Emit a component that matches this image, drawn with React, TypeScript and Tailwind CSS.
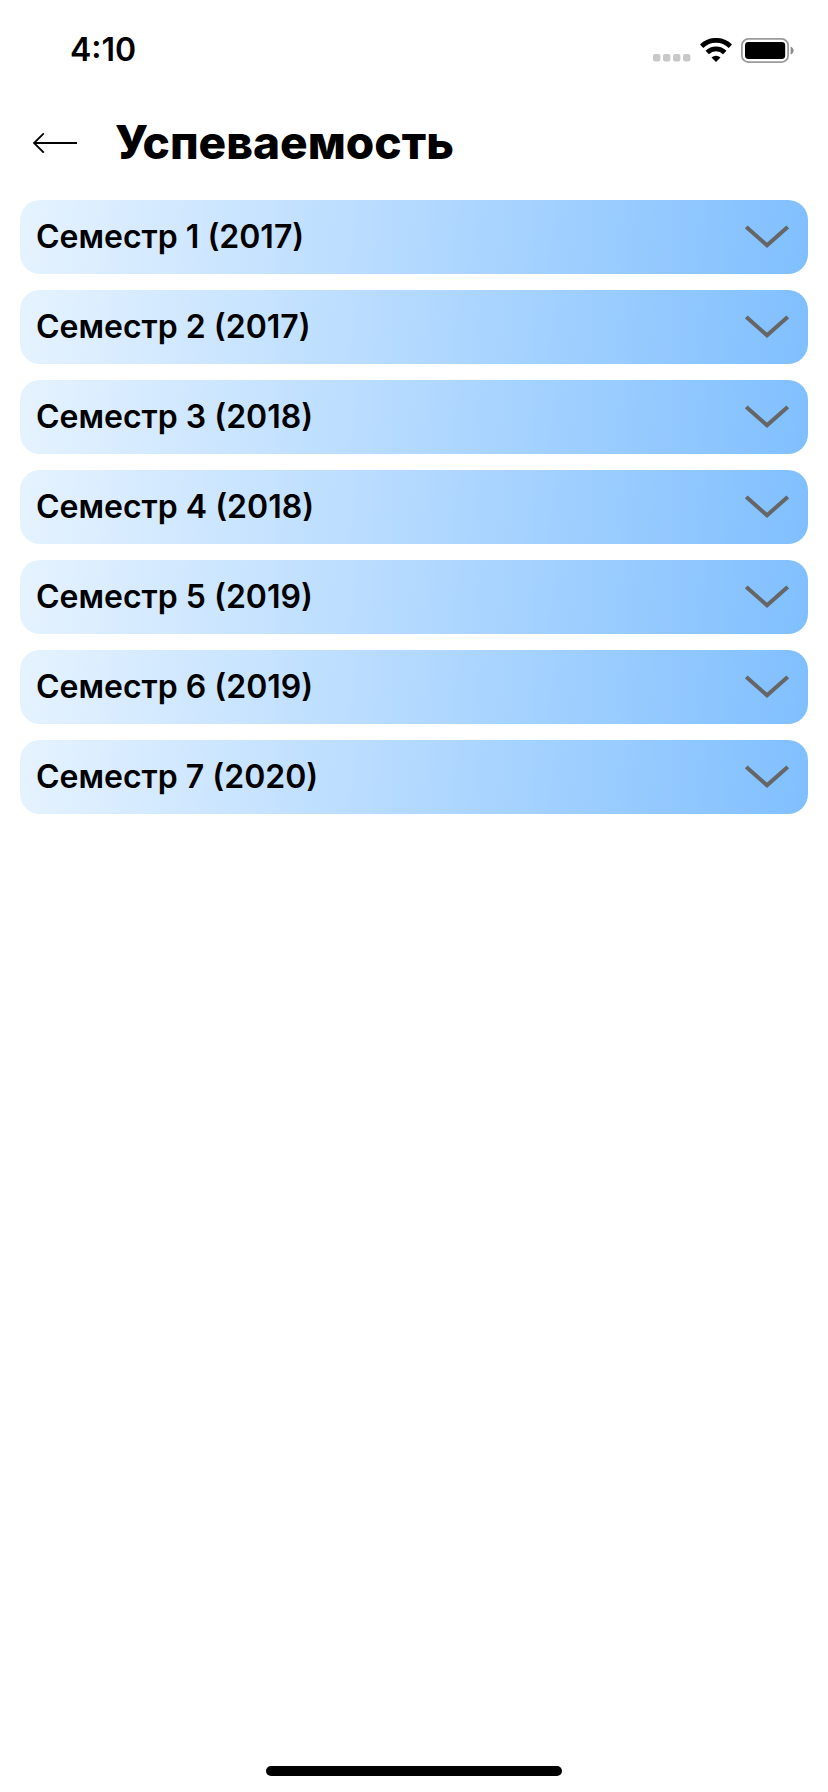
const semesters = [
  { number: 1, year: 2017 },
  { number: 2, year: 2017 },
  { number: 3, year: 2018 },
  { number: 4, year: 2018 },
  { number: 5, year: 2019 },
  { number: 6, year: 2019 },
  { number: 7, year: 2020 },
];

function SignalDots() {
  return (
    <svg className="h-2 w-[38px]" viewBox="0 0 38 8" fill="#c8c8c8" aria-hidden="true">
      <rect x="0" y="0" width="7.4" height="7.4" rx="2.2" />
      <rect x="10" y="0" width="7.4" height="7.4" rx="2.2" />
      <rect x="20" y="0" width="7.4" height="7.4" rx="2.2" />
      <rect x="30" y="0" width="7.4" height="7.4" rx="2.2" />
    </svg>
  );
}

function Wifi() {
  return (
    <svg className="h-[25px] w-8" viewBox="0 0 32 25" fill="none" stroke="#000" aria-hidden="true">
      <path d="M1.600 8.200a20.600 20.600 0 0 1 28.800 0" strokeWidth="4.8" />
      <path d="M7.200 14.500a12.600 12.600 0 0 1 17.600 0" strokeWidth="4.8" />
      <path d="M16 24l-4.500-4.400a6.400 6.400 0 0 1 9 0z" fill="#000" stroke="none" />
    </svg>
  );
}

function Battery() {
  return (
    <svg className="h-[25px] w-[53px]" viewBox="0 0 53 25" aria-hidden="true">
      <rect x="0.9" y="0.9" width="46.200" height="23.200" rx="6.4" fill="none" stroke="#9b9b9b" strokeWidth="1.8" />
      <rect x="4" y="4" width="40.200" height="17" rx="3.4" fill="#000" />
      <path d="M49.600 8.400c1.800.7 3 2.300 3 4.100s-1.200 3.400-3 4.100z" fill="#8c8c8c" />
    </svg>
  );
}

function BackArrow() {
  return (
    <svg className="h-[22px] w-11" viewBox="0 -2 44 22" fill="none" stroke="#000" strokeWidth="1.8" aria-hidden="true">
      <path d="M44 10H0.800M10.800 0.300L1 10l9.800 9.700" />
    </svg>
  );
}

function Chevron() {
  return (
    <svg className="h-6 w-11" viewBox="0 0 44 24" fill="none" stroke="#666" strokeWidth="4" aria-hidden="true">
      <path d="M1.300 1.900L22 20.300 42.700 1.900" />
    </svg>
  );
}

export default function App() {
  return (
    <div className="flex min-h-screen flex-col bg-white font-['Inter',sans-serif] text-black">
      <div className="flex h-[100px] items-center justify-between pr-[34px] pl-[70px]">
        <span className="text-[32px] leading-10 font-semibold">4:10</span>
        <div className="flex items-center gap-[9px]">
          <div className="pt-4">
            <SignalDots />
          </div>
          <div className="flex items-center gap-[9px]">
            <Wifi />
            <Battery />
          </div>
        </div>
      </div>

      <header className="flex h-[84px] items-center gap-[38px] px-[33px]">
        <button type="button" aria-label="Назад">
          <BackArrow />
        </button>
        <h1 className="text-[46px] leading-[56px] font-extrabold">Успеваемость</h1>
      </header>

      <main className="flex-1 px-5 pt-4">
        <ul className="flex flex-col gap-4">
          {semesters.map(({ number, year }) => (
            <li key={number}>
              <button
                type="button"
                aria-expanded="false"
                className="flex h-[74px] w-full items-center justify-between rounded-[20px] bg-[linear-gradient(95deg,#e6f3ff,#80bfff)] pr-[19px] pl-4 text-left"
              >
                <span className="text-[32px] leading-10 font-semibold">
                  {`Семестр ${number} (${year})`}
                </span>
                <Chevron />
              </button>
            </li>
          ))}
        </ul>
      </main>

      <footer className="flex justify-center pb-4">
        <div className="h-[10px] w-[296px] rounded-full bg-black" />
      </footer>
    </div>
  );
}
